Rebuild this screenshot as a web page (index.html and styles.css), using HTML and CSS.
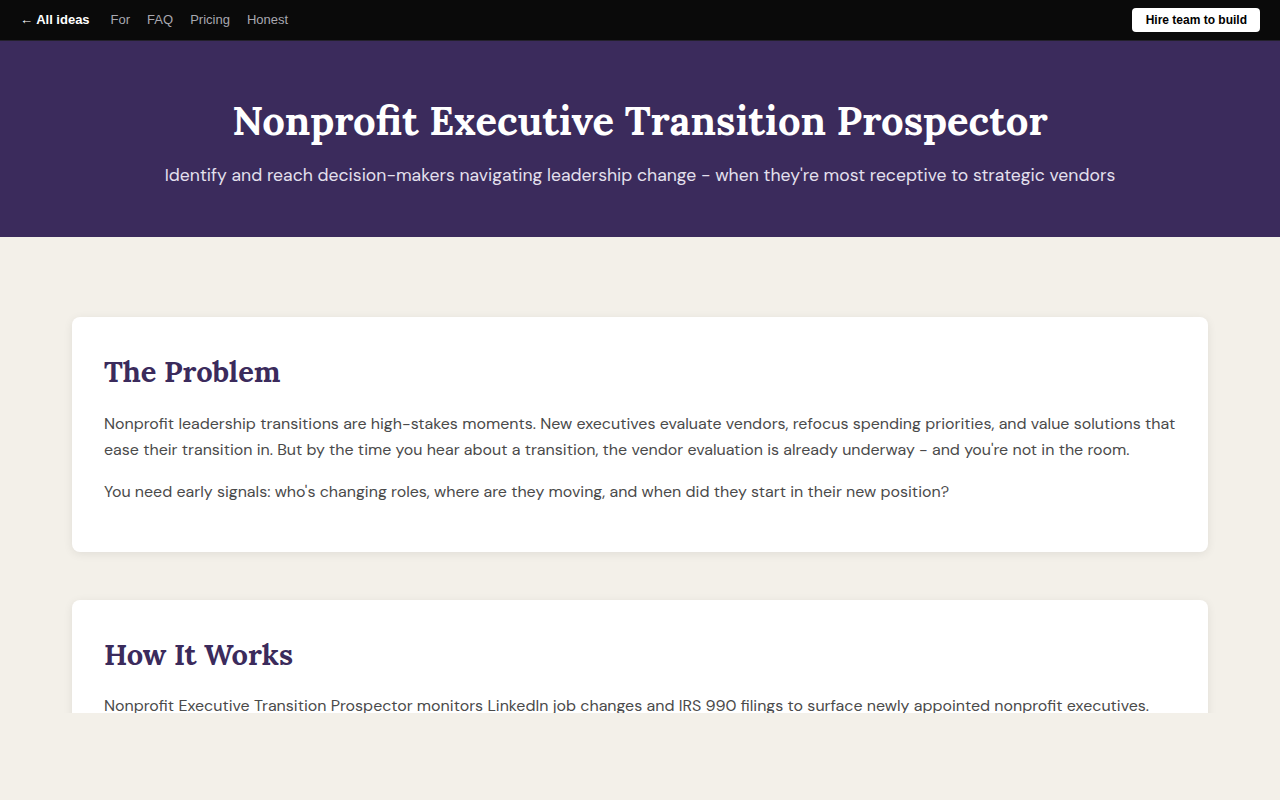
FILE: index.html
```html
<!DOCTYPE html>
<html lang="en">
<head>
    <meta charset="UTF-8">
    <meta name="viewport" content="width=device-width, initial-scale=1.0">
    <title>Nonprofit Executive Transition Prospector</title>
    <link rel="stylesheet" href="styles.css">
</head>
<body>
    <nav class="topbar">
        <div class="topbar-links">
            <a href="#" class="back-link">&larr; All ideas</a>
            <a href="#">For</a>
            <a href="#">FAQ</a>
            <a href="#">Pricing</a>
            <a href="#">Honest</a>
        </div>
        <a href="#" class="hire-btn">Hire team to build</a>
    </nav>

    <header class="hero">
        <h1>Nonprofit Executive Transition Prospector</h1>
        <p>Identify and reach decision-makers navigating leadership change - when they're most receptive to strategic vendors</p>
    </header>

    <main class="content">
        <section class="card">
            <h2>The Problem</h2>
            <p>Nonprofit leadership transitions are high-stakes moments. New executives evaluate vendors, refocus spending priorities, and value solutions that ease their transition in. But by the time you hear about a transition, the vendor evaluation is already underway - and you're not in the room.</p>
            <p>You need early signals: who's changing roles, where are they moving, and when did they start in their new position?</p>
        </section>

        <section class="card">
            <h2>How It Works</h2>
            <p>Nonprofit Executive Transition Prospector monitors LinkedIn job changes and IRS 990 filings to surface newly appointed nonprofit executives.</p>
            <p>Each profile shows the previous role, the new organization, start date and budget size, so you can reach out while priorities are still being set.</p>
        </section>
    </main>
</body>
</html>
```

FILE: styles.css
```css
body {
    margin: 0;
    background-color: #f3f0e9;
    font-family: 'DM Sans', 'Lato', sans-serif;
    color: #4a4a4a;
}

.topbar {
    height: 40px;
    background-color: #0a0a0a;
    border-bottom: 1px solid #23202c;
    display: flex;
    justify-content: space-between;
    align-items: center;
    padding: 0 20px;
    font-family: 'Liberation Sans', Arial, sans-serif;
    font-size: 13px;
}

.topbar-links {
    display: flex;
    gap: 17px;
    align-items: center;
    margin-top: -1px;
}

.topbar-links a {
    color: #a8a8b0;
    text-decoration: none;
}

.topbar-links .back-link {
    color: #fff;
    font-weight: bold;
    margin-right: 4px;
}

.hire-btn {
    background-color: #fff;
    color: #000;
    font-weight: bold;
    font-size: 12px;
    text-decoration: none;
    padding: 5px 13px 5px 14px;
    border-radius: 4px;
}

.hero {
    background-color: #3b2b5c;
    color: #fff;
    text-align: center;
    padding: 56px 20px 50px;
}

.hero h1 {
    font-family: 'Lora', 'Liberation Serif', serif;
    font-size: 40px;
    font-weight: bold;
    margin: 0 0 19px;
    line-height: 48px;
}

.hero p {
    margin: 0;
    font-size: 17.6px;
    line-height: 23px;
    color: #e4e0ee;
}

.content {
    height: 396px;
    overflow: hidden;
    padding: 80px 72px 0;
}

.card {
    background-color: #fff;
    border-radius: 8px;
    box-shadow: 0 2px 10px rgba(0, 0, 0, 0.08);
    padding: 36px 32px 31px;
    margin-bottom: 48px;
}

.card h2 {
    font-family: 'Lora', 'Liberation Serif', serif;
    font-size: 29px;
    color: #3b2b5c;
    margin: 0 0 20px;
    line-height: 1.3;
}

.card p {
    font-size: 16px;
    line-height: 26px;
    margin: 0 0 16px;
}
```
